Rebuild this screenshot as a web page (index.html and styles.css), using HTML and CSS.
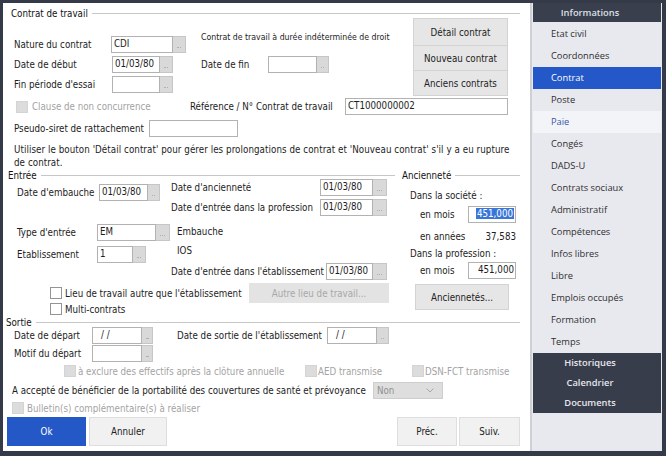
FILE: index.html
```html
<!DOCTYPE html>
<html lang="fr">
<head>
<meta charset="utf-8">
<title>Contrat</title>
<link rel="stylesheet" href="styles.css">
</head>
<body>
<div class="window">
  <main class="main">
    <div class="legend lg-contrat"><span>Contrat de travail</span></div>
    <div class="top">
      <div class="top-left">
        <div class="row">
          <span class="lbl l-nature">Nature du contrat</span>
          <span class="inp i-cdi">CDI</span><span class="ell"></span>
          <span class="note">Contrat de travail à durée indéterminée de droit</span>
        </div>
        <div class="row">
          <span class="lbl l-debut">Date de début</span>
          <span class="inp i-date">01/03/80</span><span class="ell"></span>
          <span class="lbl l-fin">Date de fin</span>
          <span class="inp i-fin"></span><span class="ell e12"></span>
        </div>
        <div class="row">
          <span class="lbl l-debut">Fin période d'essai</span>
          <span class="inp i-date"></span><span class="ell"></span>
        </div>
      </div>
      <div class="btn-col">
        <div class="btn b-detail">Détail contrat</div>
        <div class="btn b-std">Nouveau contrat</div>
        <div class="btn b-std">Anciens contrats</div>
      </div>
    </div>
    <div class="row r-ref">
      <span class="cb dis"></span>
      <span class="lbl dim l-clause">Clause de non concurrence</span>
      <span class="lbl l-ref">Référence / N° Contrat de travail</span>
      <span class="inp i-ref">CT1000000002</span>
    </div>
    <div class="row r-siret">
      <span class="lbl l-siret">Pseudo-siret de rattachement</span>
      <span class="inp i-siret"></span>
    </div>
    <p class="info">Utiliser le bouton 'Détail contrat' pour gérer les prolongations de contrat et 'Nouveau contrat' s'il y a eu rupture<br>de contrat.</p>

    <div class="mid">
      <div class="entree">
        <div class="legend lg-entree"><span>Entrée</span></div>
        <div class="entree-body">
          <div class="ecol-left">
            <div class="row">
              <span class="lbl l-emb">Date d'embauche</span>
              <span class="inp i-emb">01/03/80</span><span class="ell e12"></span>
            </div>
            <div class="row r-type">
              <span class="lbl l-type">Type d'entrée</span>
              <span class="inp i-type">EM</span><span class="ell e14"></span>
            </div>
            <div class="row r-etab">
              <span class="lbl l-type">Etablissement</span>
              <span class="inp i-etab">1</span><span class="ell"></span>
            </div>
          </div>
          <div class="ecol-right">
            <div class="row">
              <span class="lbl l-anc">Date d'ancienneté</span>
              <span class="inp i-anc">01/03/80</span><span class="ell e14"></span>
            </div>
            <div class="row r-prof">
              <span class="lbl l-anc">Date d'entrée dans la profession</span>
              <span class="inp i-anc">01/03/80</span><span class="ell e14"></span>
            </div>
            <div class="txt t-emb">Embauche</div>
            <div class="txt t-ios">IOS</div>
            <div class="row r-dete">
              <span class="lbl l-dete">Date d'entrée dans l'établissement</span>
              <span class="inp i-dete">01/03/80</span><span class="ell e14"></span>
            </div>
          </div>
        </div>
        <div class="row r-lieu">
          <span class="cb"></span>
          <span class="lbl l-lieu">Lieu de travail autre que l'établissement</span>
          <div class="btn btn-dis b-autre">Autre lieu de travail...</div>
        </div>
        <div class="row r-multi">
          <span class="cb"></span>
          <span class="lbl l-multi">Multi-contrats</span>
        </div>
      </div>
      <div class="anc">
        <div class="legend lg-anc"><span>Ancienneté</span></div>
        <div class="txt a-head a-soc">Dans la société :</div>
        <div class="row a-row a-mois1">
          <span class="lbl l-mois">en mois</span>
          <span class="inp i-num"><span class="sel">451,000</span></span>
        </div>
        <div class="row a-row a-ans">
          <span class="lbl l-mois">en années</span>
          <span class="val">37,583</span>
        </div>
        <div class="txt a-head a-prof">Dans la profession :</div>
        <div class="row a-row a-mois2">
          <span class="lbl l-mois">en mois</span>
          <span class="inp i-num">451,000</span>
        </div>
        <div class="btn b-ancs">Anciennetés...</div>
      </div>
    </div>

    <div class="legend lg-sortie"><span>Sortie</span></div>
    <div class="row s-row1">
      <span class="lbl l-dep">Date de départ</span>
      <span class="inp i-dep">/ /</span><span class="ell e11"></span>
      <span class="lbl l-sortie">Date de sortie de l'établissement</span>
      <span class="inp i-dep">/ /</span><span class="ell e12"></span>
    </div>
    <div class="row s-row2">
      <span class="lbl l-dep">Motif du départ</span>
      <span class="inp i-dep"></span><span class="ell e11"></span>
    </div>
    <div class="row s-row3">
      <span class="cb dis"></span>
      <span class="lbl dim l-excl">à exclure des effectifs après la clôture annuelle</span>
      <span class="cb dis"></span>
      <span class="lbl dim l-aed">AED transmise</span>
      <span class="cb dis"></span>
      <span class="lbl dim l-dsn">DSN-FCT transmise</span>
    </div>
    <div class="row s-row4">
      <span class="lbl l-porta">A accepté de bénéficier de la portabilité des couvertures de santé et prévoyance</span>
      <span class="select">Non<svg class="chev" width="8" height="5" viewBox="0 0 8 5"><path d="M0.5 0.5 L4 4 L7.5 0.5" fill="none" stroke="#a8a8a8" stroke-width="1"/></svg></span>
    </div>
    <div class="row s-row5">
      <span class="cb dis"></span>
      <span class="lbl dim l-bull">Bulletin(s) complémentaire(s) à réaliser</span>
    </div>
    <div class="actions">
      <div class="btn b-ok">Ok</div>
      <div class="btn b-annuler">Annuler</div>
      <div class="btn b-prec">Préc.</div>
      <div class="btn b-suiv">Suiv.</div>
    </div>
  </main>
  <div class="vsep"></div>
  <nav class="side">
    <div class="side-head">Informations</div>
    <div class="item">Etat civil</div>
    <div class="item">Coordonnées</div>
    <div class="item active">Contrat</div>
    <div class="item">Poste</div>
    <div class="item hover">Paie</div>
    <div class="item">Congés</div>
    <div class="item">DADS-U</div>
    <div class="item">Contrats sociaux</div>
    <div class="item">Administratif</div>
    <div class="item">Compétences</div>
    <div class="item">Infos libres</div>
    <div class="item">Libre</div>
    <div class="item">Emplois occupés</div>
    <div class="item">Formation</div>
    <div class="item">Temps</div>
    <div class="side-group">
      <div class="gitem">Historiques</div>
      <div class="gitem">Calendrier</div>
      <div class="gitem">Documents</div>
    </div>
  </nav>
</div>
</body>
</html>
```

FILE: styles.css
```css
* { box-sizing: border-box; margin: 0; padding: 0; }

body {
  margin: 0;
  width: 666px;
  height: 456px;
  overflow: hidden;
  background: #353a48;
  font-family: "DejaVu Sans Condensed", "DejaVu Sans", sans-serif;
  font-size: 9.7px;
  color: #1c1c1c;
}

.window {
  display: flex;
  width: 666px;
  height: 456px;
  padding: 3px 4px 5px 3px;
}

.main {
  width: 527px;
  height: 448px;
  background: #fff;
  display: flex;
  flex-direction: column;
}

.vsep { width: 2px; background: #cfd0d5; }

/* legends / group headers */
.legend {
  display: flex;
  align-items: center;
  white-space: nowrap;
}
.legend::after {
  content: "";
  flex: 1;
  height: 1px;
  background: #c6c6c6;
  margin-left: 4px;
}
.lg-contrat { height: 20px; padding: 0 10px 0 8px; color: #111; }
.lg-entree { height: 12px; padding: 0 2px 0 5px; color: #111; }
.lg-anc { height: 12px; padding: 0 10px 0 5px; color: #111; }
.lg-sortie { height: 12px; padding: 0 10px 0 3px; margin-top: 1px; color: #111; }

/* generic */
.row { display: flex; align-items: center; height: 17px; white-space: nowrap; flex: none; }
.lbl { flex: none; white-space: nowrap; }
.dim { color: #a3a3a3; }
.txt { height: 14px; line-height: 14px; white-space: nowrap; }

.inp {
  flex: none;
  height: 17px;
  border: 1px solid #b2b2b2;
  background: #fff;
  padding: 0 2px;
  line-height: 14px;
  white-space: nowrap;
  overflow: hidden;
}
.ell {
  flex: none;
  width: 13px;
  height: 17px;
  background: #d9d9d9;
  border: 1px solid #c6c6c6;
  border-left: none;
  position: relative;
}
.ell::after {
  content: "";
  position: absolute;
  left: 4px;
  right: 4px;
  bottom: 4px;
  border-bottom: 1px dotted #b0b0b0;
}
.e11 { width: 11px; }
.e12 { width: 12px; }
.e14 { width: 14px; }

.cb {
  flex: none;
  width: 12px;
  height: 12px;
  border: 1px solid #949494;
  background: #fff;
}
.cb.dis { background: #dcdcdc; border-color: #d4d4d4; }

.btn {
  display: flex;
  align-items: center;
  justify-content: center;
  background: #e6e6e6;
  border: 1px solid #d3d3d3;
  color: #222;
  white-space: nowrap;
  flex: none;
}
.btn-dis { color: #a8a8a8; background: #e3e3e3; border-color: #e3e3e3; }

/* top block */
.top { display: flex; margin-top: -5px; }
.top-left { padding: 18px 0 0 11px; display: flex; flex-direction: column; gap: 3px; }
.l-nature { width: 97px; }
.i-cdi { width: 62px; }
.note { margin-left: 15px; align-self: flex-start; margin-top: -4px; font-size: 8.7px; }
.l-debut { width: 98px; }
.i-date { width: 48px; }
.l-fin { width: 67px; margin-left: 28px; }
.i-fin { width: 49px; }

.btn-col { margin-left: auto; margin-right: 22px; width: 95px; display: flex; flex-direction: column; }
.b-detail { height: 28px; }
.b-std { height: 26px; margin-top: -1px; }

.r-ref { margin-top: 2px; padding-left: 13px; }
.l-clause { margin-left: 4px; width: 158px; }
.l-ref { width: 155px; }
.i-ref { width: 163px; }

.r-siret { margin-top: 5px; padding-left: 11px; }
.l-siret { width: 135px; }
.i-siret { width: 89px; }

.info { margin-top: 6px; padding-left: 11px; line-height: 13px; white-space: nowrap; letter-spacing: 0.07px; }

/* middle */
.mid { display: flex; flex: none; }
.entree { width: 394px; display: flex; flex-direction: column; }
.entree-body { display: flex; margin-top: -2px; }
.ecol-left { width: 168px; padding: 5px 0 0 14px; display: flex; flex-direction: column; }
.ecol-right { display: flex; flex-direction: column; }
.l-emb { width: 82px; }
.i-emb { width: 49px; }
.r-type { margin-top: 23px; }
.l-type { width: 80px; }
.i-type { width: 59px; }
.r-etab { margin-top: 5px; }
.i-etab { width: 36px; }
.l-anc { width: 149px; }
.i-anc { width: 53px; }
.r-prof { margin-top: 3px; }
.t-emb { margin-top: 9px; padding-left: 6px; }
.t-ios { margin-top: 5px; padding-left: 6px; }
.r-dete { margin-top: 5px; }
.l-dete { width: 155px; }
.i-dete { width: 47px; }

.r-lieu { height: 20px; margin-top: 3px; padding-left: 47px; }
.l-lieu { margin-left: 3px; width: 184px; }
.b-autre { width: 140px; height: 20px; }
.r-multi { height: 12px; padding-left: 47px; }
.l-multi { margin-left: 3px; }

.anc { width: 133px; display: flex; flex-direction: column; }
.a-head { padding-left: 13px; }
.a-soc { margin-top: 8px; }
.a-row { padding-left: 23px; padding-right: 14px; }
.l-mois { width: 48px; }
.a-mois1 { margin-top: 3px; }
.i-num { width: 48px; text-align: right; padding: 0 1px; }
.sel { background: #3a76d8; color: #fff; padding: 0 1px; }
.a-ans { height: 14px; margin-top: 6px; }
.val { flex: 1; text-align: right; }
.a-prof { margin-top: 4px; }
.a-mois2 { margin-top: 1px; }
.b-ancs { width: 94px; height: 26px; margin: 5px 0 0 18px; }

/* sortie */
.s-row1 { margin-top: -1px; padding-left: 11px; }
.l-dep { width: 78px; }
.i-dep { width: 50px; padding-left: 8px; }
.l-sortie { margin-left: 24px; width: 150px; }
.s-row2 { margin-top: 1px; padding-left: 11px; }
.s-row3 { height: 12px; margin-top: 3px; padding-left: 61px; }
.l-excl { margin-left: 2px; width: 227px; }
.l-aed { margin-left: 1px; width: 94px; }
.l-dsn { margin-left: 1px; }
.s-row4 { margin-top: 5px; padding-left: 9px; }
.l-porta { width: 361px; }
.select {
  width: 70px;
  height: 17px;
  background: #dedede;
  border: 1px solid #cdcdcd;
  color: #8e8e8e;
  padding-left: 3px;
  line-height: 14px;
  display: flex;
  align-items: center;
  justify-content: space-between;
  padding-right: 8px;
}
.s-row5 { height: 12px; margin-top: 3px; padding-left: 9px; }
.l-bull { margin-left: 3px; }

.actions { display: flex; height: 29px; margin-top: 3px; padding: 0 10px 0 4px; }
.actions .btn { height: 29px; background: #f1f1f1; border-color: #dedede; }
.actions .b-ok { width: 79px; background: #2358c6; border-color: #2358c6; color: #fff; }
.b-annuler { width: 78px; margin-left: 3px; }
.b-prec { width: 60px; margin-left: auto; }
.b-suiv { width: 61px; margin-left: 2px; }

/* sidebar */
.side {
  width: 130px;
  background: #e8e9ee;
  padding: 0 1px;
  display: flex;
  flex-direction: column;
  font-family: "Open Sans", "Noto Sans", sans-serif;
  font-size: 9.3px;
  color: #2e2e2e;
}
.side-head {
  height: 19px;
  line-height: 19px;
  background: #3a3f4e;
  color: #dfe0e6;
  text-align: center;
  padding-right: 14px;
  font-weight: 600;
}
.item { height: 22px; line-height: 22px; padding-left: 18px; flex: none; }
.side-head + .item { margin-top: 1px; }
.item.active { background: #2457c8; color: #fff; }
.item.hover { background: #f3f4f8; color: #3656a6; }
.side-group { background: #383d4c; color: #e6e7ec; font-weight: 600; }
.gitem { height: 20px; line-height: 20px; text-align: center; padding-right: 14px; }
```
